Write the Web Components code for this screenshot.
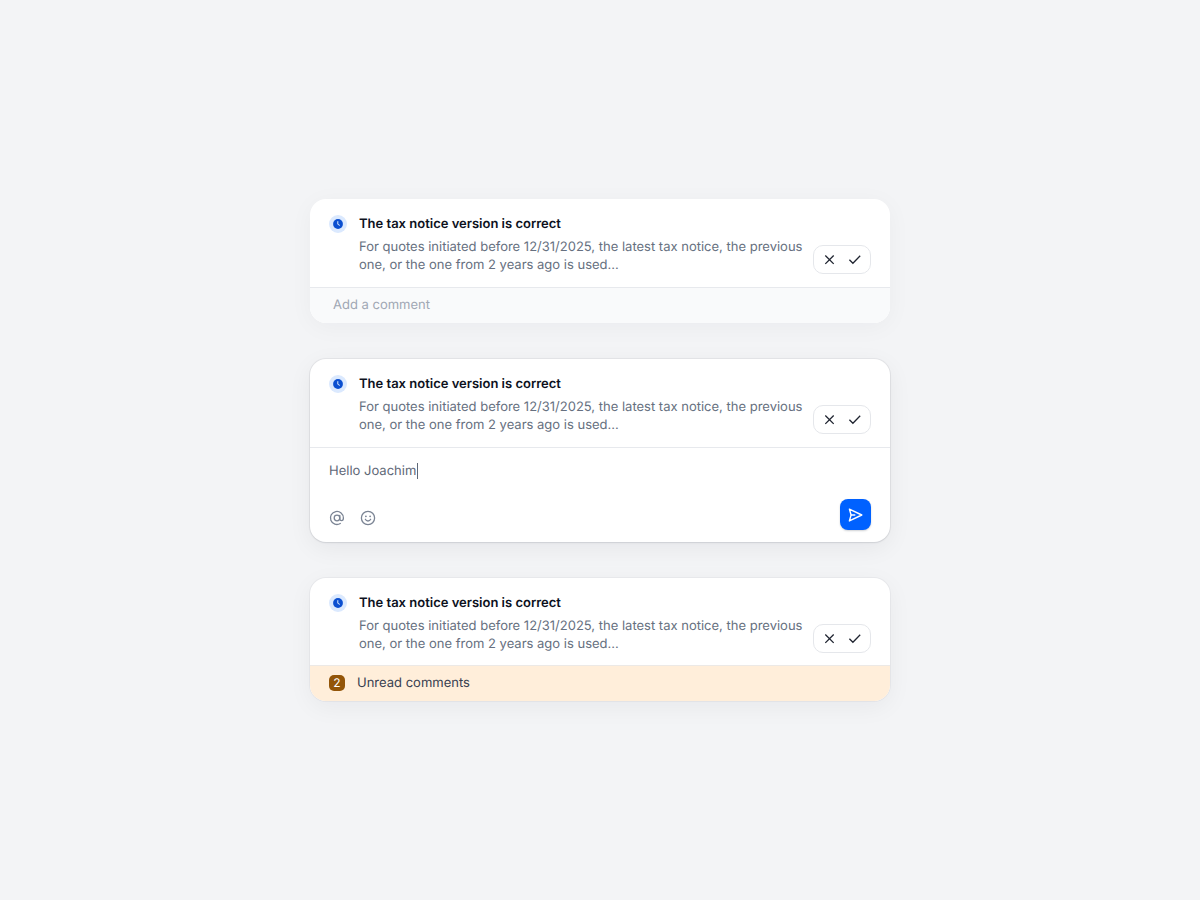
<!DOCTYPE html>
<html lang="en">
<head>
<meta charset="utf-8">
<meta name="viewport" content="width=device-width, initial-scale=1">
<title>Review comments</title>
<style>
    body {
        margin: 0;
        background: #f3f4f6;
        color: #101828;
        font-family: Inter, "Liberation Sans", sans-serif;
        font-size: 13px;
        line-height: 18px;
        text-rendering: geometricPrecision;
    }
</style>
</head>
<body>
<review-board>
    <review-card>
        <span slot="title">The tax notice version is correct</span>
        <span slot="text">For quotes initiated before 12/31/2025, the latest tax notice, the previous one, or the one from 2 years ago is used...</span>
        <comment-prompt></comment-prompt>
    </review-card>
    <review-card raised>
        <span slot="title">The tax notice version is correct</span>
        <span slot="text">For quotes initiated before 12/31/2025, the latest tax notice, the previous one, or the one from 2 years ago is used...</span>
        <comment-editor value="Hello Joachim"></comment-editor>
    </review-card>
    <review-card outlined>
        <span slot="title">The tax notice version is correct</span>
        <span slot="text">For quotes initiated before 12/31/2025, the latest tax notice, the previous one, or the one from 2 years ago is used...</span>
        <unread-comments count="2">Unread comments</unread-comments>
    </review-card>
</review-board>

<script>
class ReviewBoard extends HTMLElement {
    constructor() {
        super();
        this.attachShadow({ mode: 'open' }).innerHTML = `
            <style>
                :host {
                    display: flex;
                    flex-direction: column;
                    align-items: center;
                    justify-content: center;
                    gap: 36px;
                    box-sizing: border-box;
                    min-height: 100vh;
                    padding: 24px;
                }
            </style>
            <slot></slot>
        `;
    }
}

class StatusIcon extends HTMLElement {
    constructor() {
        super();
        this.attachShadow({ mode: 'open' }).innerHTML = `
            <style>
                :host {
                    display: block;
                    width: 18px;
                    height: 18px;
                }

                svg {
                    display: block;
                }
            </style>
            <svg width="18" height="18" viewBox="0 0 18 18" fill="none" aria-hidden="true">
                <circle cx="9" cy="9" r="9" fill="#dbe9fe"/>
                <circle cx="9" cy="9" r="4.9" fill="#0b4fd0"/>
                <path d="M8.8 6.6v2.7l1.7 .9" stroke="#dbe9fe" stroke-width="1" stroke-linecap="round" stroke-linejoin="round"/>
            </svg>
        `;
    }
}

class DecisionButtons extends HTMLElement {
    constructor() {
        super();
        this.attachShadow({ mode: 'open' }).innerHTML = `
            <style>
                :host {
                    display: flex;
                    box-sizing: border-box;
                    height: 29px;
                    padding: 0 3px;
                    border: 1px solid #e5e7eb;
                    border-radius: 10px;
                    background: #fff;
                }

                button {
                    display: grid;
                    place-items: center;
                    width: 25px;
                    padding: 0;
                    border: 0;
                    background: none;
                    color: #1f2430;
                    cursor: pointer;
                }
            </style>
            <button type="button" aria-label="Reject">
                <svg width="14" height="14" viewBox="0 0 14 14" fill="none" stroke="currentColor" stroke-width="1.3">
                    <path d="M2.3 2.5l8.4 8.4M10.7 2.5l-8.4 8.4"/>
                </svg>
            </button>
            <button type="button" aria-label="Approve">
                <svg width="14" height="14" viewBox="0 0 14 14" fill="none" stroke="currentColor" stroke-width="1.3">
                    <path d="M1.4 6.8l3.5 3.5L12.2 2.8"/>
                </svg>
            </button>
        `;
    }
}

class ReviewCard extends HTMLElement {
    constructor() {
        super();
        this.attachShadow({ mode: 'open' }).innerHTML = `
            <style>
                :host {
                    display: block;
                    width: 100%;
                    max-width: 580px;
                    border-radius: 16px;
                    overflow: hidden;
                    background: #fff;
                    box-shadow: 0 4px 24px rgba(16, 24, 40, 0.04);
                }

                :host([raised]) {
                    box-shadow: 0 0 0 1px rgba(16, 24, 40, 0.05), 0 1px 2px rgba(16, 24, 40, 0.08), 0 6px 24px rgba(16, 24, 40, 0.06);
                }

                :host([outlined]) {
                    box-shadow: 0 0 0 1px rgba(16, 24, 40, 0.04), 0 6px 24px rgba(16, 24, 40, 0.05);
                }

                .summary {
                    display: flex;
                    padding: 16px 19px 13px;
                    border-bottom: 1px solid #e7e9ed;
                }

                :host([outlined]) .summary {
                    padding-bottom: 12px;
                    border-color: #ece9e6;
                }

                .content {
                    flex: 1;
                    margin: 0 4px 0 12px;
                }

                h2 {
                    margin: 0 0 5px;
                    font-size: 13px;
                    font-weight: 600;
                    color: #0c111d;
                }

                p {
                    margin: 0;
                    color: #667080;
                }

                decision-buttons {
                    align-self: flex-end;
                }
            </style>
            <div class="summary">
                <status-icon></status-icon>
                <div class="content">
                    <h2><slot name="title"></slot></h2>
                    <p><slot name="text"></slot></p>
                </div>
                <decision-buttons></decision-buttons>
            </div>
            <slot></slot>
        `;
    }
}

class CommentPrompt extends HTMLElement {
    constructor() {
        super();
        this.attachShadow({ mode: 'open' }).innerHTML = `
            <style>
                :host {
                    display: block;
                    background: #f9fafb;
                }

                input {
                    display: block;
                    box-sizing: border-box;
                    width: 100%;
                    height: 35px;
                    padding: 0 23px 2px;
                    border: 0;
                    outline: 0;
                    background: none;
                    color: #4b5565;
                    font: inherit;
                    text-rendering: inherit;
                }

                input::placeholder {
                    color: #a0a7b4;
                    opacity: 1;
                }
            </style>
            <input type="text" placeholder="Add a comment" aria-label="Add a comment">
        `;
    }
}

class CommentEditor extends HTMLElement {
    constructor() {
        super();
        this.attachShadow({ mode: 'open' });
    }

    connectedCallback() {
        this.render();
    }

    render() {
        this.shadowRoot.innerHTML = `
            <style>
                :host {
                    display: block;
                    padding: 14px 19px 12px;
                }

                .field {
                    display: flex;
                    align-items: center;
                    color: #5f6878;
                }

                input {
                    field-sizing: content;
                    height: 18px;
                    padding: 0;
                    border: 0;
                    outline: 0;
                    background: none;
                    color: inherit;
                    caret-color: transparent;
                    font: inherit;
                    text-rendering: inherit;
                }

                .caret {
                    width: 1px;
                    height: 16px;
                    margin-left: 1px;
                    background: currentColor;
                }

                .toolbar {
                    display: flex;
                    align-items: center;
                    gap: 15px;
                    margin-top: 19px;
                }

                button {
                    display: grid;
                    place-items: center;
                    padding: 0;
                    border: 0;
                    background: none;
                    cursor: pointer;
                }

                .tool {
                    width: 16px;
                    height: 16px;
                    margin-top: 7px;
                    color: #7b8494;
                }

                .send {
                    width: 31px;
                    height: 31px;
                    margin-left: auto;
                    border-radius: 8px;
                    background: #0061ff;
                    box-shadow: 0 1px 2px rgba(16, 24, 40, 0.2);
                    color: #fff;
                }
            </style>
            <div class="field">
                <input type="text" aria-label="Comment">
                <span class="caret"></span>
            </div>
            <div class="toolbar">
                <button class="tool" type="button" aria-label="Mention someone">
                    <svg width="16" height="16" viewBox="0 0 16 16" fill="none" stroke="currentColor" stroke-width="1.3" stroke-linecap="round">
                        <circle cx="8" cy="8" r="2.8"/>
                        <path d="M10.8 5.3v3.4c0 1.2 .7 1.9 1.7 1.9s1.9-.9 1.9-2.6A6.5 6.5 0 1 0 11.3 13.5"/>
                    </svg>
                </button>
                <button class="tool" type="button" aria-label="Add emoji">
                    <svg width="16" height="16" viewBox="0 0 16 16" fill="none" stroke="currentColor" stroke-width="1.3" stroke-linecap="round">
                        <circle cx="8" cy="8" r="6.6"/>
                        <path d="M5.3 9.3c.6 1.1 1.5 1.7 2.7 1.7s2.1-.6 2.7-1.7"/>
                        <circle cx="5.9" cy="6.3" r=".9" fill="currentColor" stroke="none"/>
                        <circle cx="10.1" cy="6.3" r=".9" fill="currentColor" stroke="none"/>
                    </svg>
                </button>
                <button class="send" type="button" aria-label="Send">
                    <svg width="16" height="16" viewBox="0 0 16 16" fill="none" stroke="currentColor" stroke-width="1.4" stroke-linejoin="round" stroke-linecap="round">
                        <path d="M1.4 2.1L13.8 8L1.4 13.9L3.1 8Z"/>
                        <path d="M3.1 8H6.8"/>
                    </svg>
                </button>
            </div>
        `;
        this.shadowRoot.querySelector('input').value = this.getAttribute('value') || '';
    }
}

class UnreadComments extends HTMLElement {
    constructor() {
        super();
        this.attachShadow({ mode: 'open' });
    }

    connectedCallback() {
        this.render();
    }

    render() {
        this.shadowRoot.innerHTML = `
            <style>
                :host {
                    display: flex;
                    align-items: center;
                    gap: 12px;
                    box-sizing: border-box;
                    height: 35px;
                    padding: 0 19px 2px;
                    background: #ffeeda;
                    color: #384050;
                }

                .count {
                    width: 16px;
                    border-radius: 5px;
                    background: #935508;
                    color: #fff;
                    font-size: 12px;
                    line-height: 16px;
                    text-align: center;
                }
            </style>
            <span class="count">${this.getAttribute('count')}</span>
            <slot></slot>
        `;
    }
}

customElements.define('review-board', ReviewBoard);
customElements.define('status-icon', StatusIcon);
customElements.define('decision-buttons', DecisionButtons);
customElements.define('review-card', ReviewCard);
customElements.define('comment-prompt', CommentPrompt);
customElements.define('comment-editor', CommentEditor);
customElements.define('unread-comments', UnreadComments);
</script>
</body>
</html>
